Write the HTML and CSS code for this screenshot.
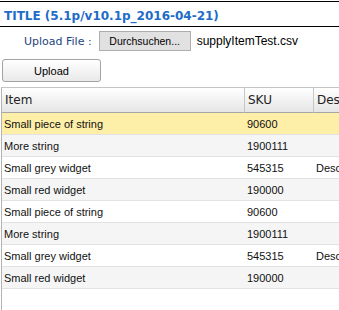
FILE: index.html
```html
<!DOCTYPE html>
<html>
<head>
<meta charset="utf-8">
<link rel="stylesheet" href="styles.css">
</head>
<body>
<div class="title">TITLE (5.1p/v10.1p_2016-04-21)</div>
<div class="file-row">
  <span class="file-label">Upload File :</span>
  <button class="browse">Durchsuchen...</button>
  <span class="file-name">supplyItemTest.csv</span>
</div>
<button class="upload">Upload</button>
<div class="grid">
  <table>
    <colgroup>
      <col class="c-item"><col class="c-sku"><col class="c-desc">
    </colgroup>
    <thead>
      <tr><th>Item</th><th>SKU</th><th>Description</th></tr>
    </thead>
    <tbody>
      <tr class="sel"><td>Small piece of string</td><td>90600</td><td></td></tr>
      <tr class="alt"><td>More string</td><td>1900111</td><td></td></tr>
      <tr><td>Small grey widget</td><td>545315</td><td>Description</td></tr>
      <tr class="alt"><td>Small red widget</td><td>190000</td><td></td></tr>
      <tr><td>Small piece of string</td><td>90600</td><td></td></tr>
      <tr class="alt"><td>More string</td><td>1900111</td><td></td></tr>
      <tr><td>Small grey widget</td><td>545315</td><td>Description</td></tr>
      <tr class="alt"><td>Small red widget</td><td>190000</td><td></td></tr>
    </tbody>
  </table>
</div>
</body>
</html>
```
FILE: styles.css
```css
html, body {
  margin: 0;
  padding: 0;
  background: #ffffff;
  overflow: hidden;
}
body {
  width: 339px;
  height: 310px;
  font-family: "Liberation Sans", Arial, sans-serif;
}
.title {
  margin-top: 1px;
  border-top: 1px solid #000;
  border-bottom: 1px solid #000;
  padding: 4px 0 0 4px;
  height: 20px;
  line-height: 20px;
  font-family: "DejaVu Sans", Verdana, sans-serif;
  font-weight: bold;
  font-size: 12px;
  color: #1e6cc8;
  white-space: nowrap;
}
.file-row {
  display: flex;
  align-items: center;
  margin-top: 4px;
  padding-left: 24px;
  height: 20px;
}
.file-label {
  font-family: "DejaVu Sans", Verdana, sans-serif;
  font-size: 11px;
  color: #23467e;
}
.browse {
  margin-left: 7px;
  width: 92px;
  height: 20px;
  padding: 0;
  background: #e1e1e1;
  border: 1px solid #adadad;
  border-radius: 0;
  font-family: "Liberation Sans", Arial, sans-serif;
  font-size: 10.5px;
  color: #000;
}
.file-name {
  margin-left: 6px;
  font-size: 12px;
  color: #000;
  white-space: nowrap;
}
.upload {
  display: block;
  margin: 8px 0 0 2px;
  width: 99px;
  height: 23px;
  padding: 0;
  border: 1px solid #a3a3a3;
  border-radius: 3px;
  background: linear-gradient(#ffffff, #e9e9e9);
  font-family: "Liberation Sans", Arial, sans-serif;
  font-size: 11px;
  color: #000;
}
.grid {
  margin: 5px 0 0 1px;
  width: 338px;
  height: 222px;
  overflow: hidden;
  border-left: 1px solid #b4b4b4;
  border-top: 1px solid #c4c4c4;
}
table {
  border-collapse: separate;
  border-spacing: 0;
  table-layout: fixed;
  width: 460px;
}
.c-item { width: 243px; }
.c-sku { width: 69px; }
.c-desc { width: 148px; }
th {
  box-sizing: border-box;
  height: 25px;
  padding: 0 0 0 3px;
  text-align: left;
  font-family: "DejaVu Sans", Verdana, sans-serif;
  font-weight: normal;
  font-size: 12px;
  color: #222;
  background: linear-gradient(#ffffff, #e5e5e5);
  border-right: 1px solid #c6c6c6;
  border-bottom: 1px solid #a6a6a6;
  white-space: nowrap;
  overflow: hidden;
}
td {
  box-sizing: border-box;
  height: 22px;
  padding: 0 0 0 2px;
  font-size: 11px;
  color: #111;
  border-bottom: 1px solid #e2e2e2;
  white-space: nowrap;
  overflow: hidden;
}
tr.alt td {
  background: #f5f5f5;
}
tr.sel td {
  background: #fdeea8;
}
```
